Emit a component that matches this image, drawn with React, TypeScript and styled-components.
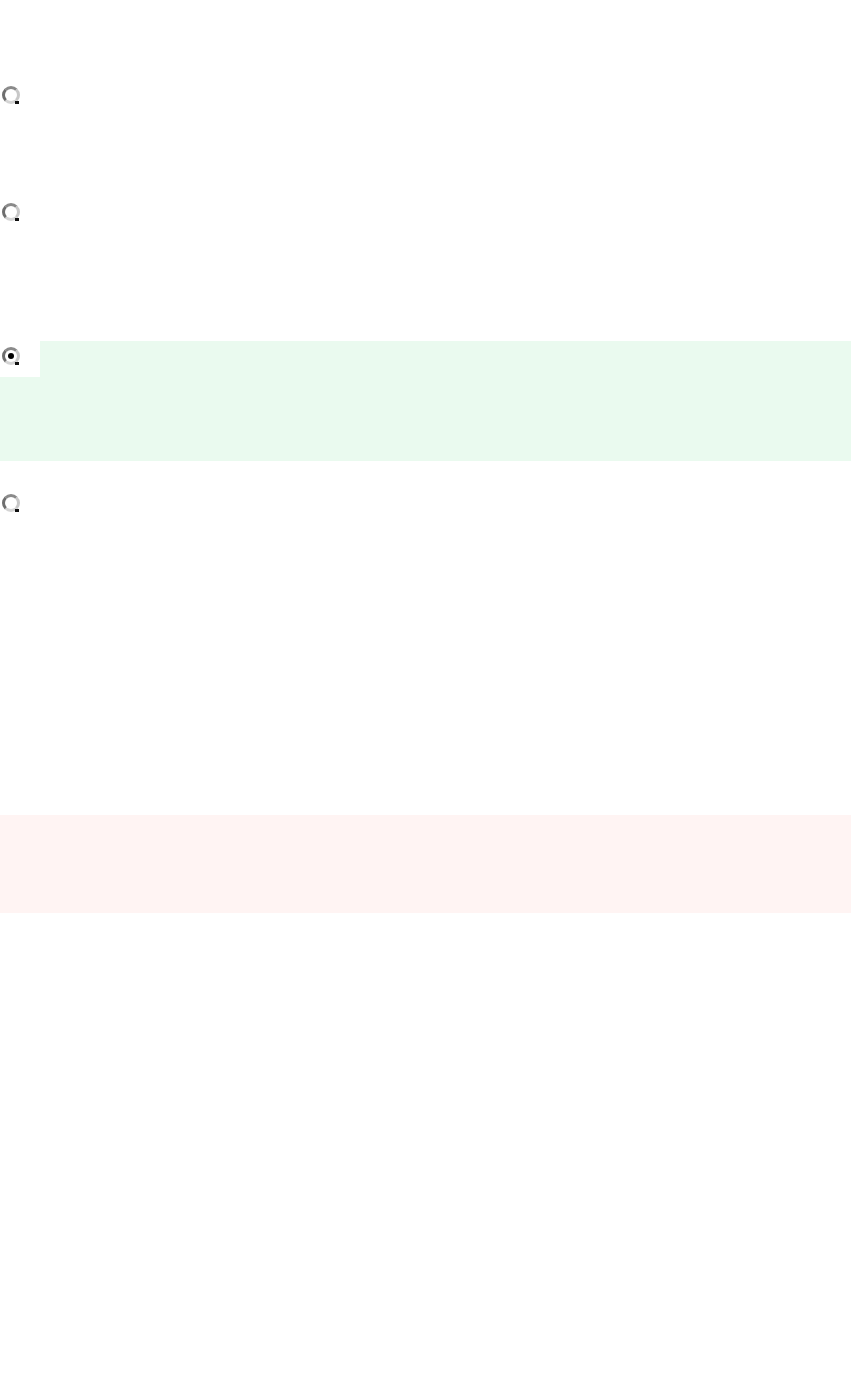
import React from 'react';
import styled, { createGlobalStyle } from 'styled-components';

const GlobalStyle = createGlobalStyle`
  html, body {
    margin: 0;
    padding: 0;
    background: #ffffff;
    font-family: "Liberation Sans", Arial, sans-serif;
  }
`;

const Page = styled.div`
  width: 851px;
  min-height: 1382px;
  padding-top: 80px;
  box-sizing: border-box;
  background: #ffffff;
`;

const OptionList = styled.div`
  display: flex;
  flex-direction: column;
`;

const Option = styled.label<{ $height: number; $selected?: boolean }>`
  display: flex;
  align-items: flex-start;
  height: ${(p) => p.$height}px;
  background: ${(p) => (p.$selected ? '#eafaef' : 'transparent')};
  cursor: pointer;
`;

const RadioCell = styled.div<{ $offset: number }>`
  width: 40px;
  height: 36px;
  box-sizing: border-box;
  padding: ${(p) => p.$offset}px 0 0 2px;
  background: #ffffff;
`;

const Radio = styled.input.attrs({ type: 'radio' })`
  appearance: none;
  -webkit-appearance: none;
  margin: 0;
  width: 18px;
  height: 18px;
  border-radius: 50%;
  border: 3px solid;
  border-color: #8a8a8a #c8c8c8 #d4d4d4 #6e6e6e;
  box-sizing: border-box;
  background: #ffffff;
  position: relative;

  &::after {
    content: '';
    position: absolute;
    right: -2px;
    bottom: -3px;
    width: 4px;
    height: 3px;
    background: #111;
  }

  &:checked::before {
    content: '';
    position: absolute;
    left: 3px;
    top: 3px;
    width: 6px;
    height: 6px;
    border-radius: 50%;
    background: #000;
  }
`;

const Notice = styled.div`
  height: 98px;
  background: #fff4f3;
`;

const options = [
  { id: 'a', height: 117, offset: 6 },
  { id: 'b', height: 144, offset: 6 },
  { id: 'c', height: 120, offset: 6, selected: true },
  { id: 'd', height: 354, offset: 33 },
];

export default function App() {
  const [value, setValue] = React.useState('c');

  return (
    <>
      <GlobalStyle />
      <Page>
        <OptionList>
          {options.map((o) => (
            <Option key={o.id} $height={o.height} $selected={value === o.id}>
              <RadioCell $offset={o.offset}>
                <Radio
                  name="choice"
                  checked={value === o.id}
                  onChange={() => setValue(o.id)}
                />
              </RadioCell>
            </Option>
          ))}
        </OptionList>
        <Notice />
      </Page>
    </>
  );
}
